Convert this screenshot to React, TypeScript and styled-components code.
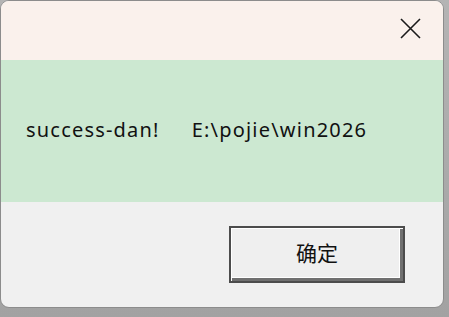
import React from "react";
import styled, { createGlobalStyle } from "styled-components";

const Global = createGlobalStyle`
  html, body { margin: 0; padding: 0; }
  body {
    width: 449px;
    height: 317px;
    overflow: hidden;
    background: linear-gradient(#b4b4b4, #a2a2a2);
    font-family: "Noto Sans", sans-serif;
  }
`;

const Window = styled.div`
  width: 444px;
  height: 308px;
  box-sizing: border-box;
  border: 1px solid #8c8c8c;
  border-radius: 9px;
  background: #f0f0f0;
  overflow: hidden;
  display: flex;
  flex-direction: column;
`;

const TitleBar = styled.div`
  height: 59px;
  flex: none;
  background: #faf1ec;
  display: flex;
  justify-content: flex-end;
  align-items: flex-start;
`;

const CloseButton = styled.button`
  border: none;
  background: transparent;
  margin: 16px 22px 0 0;
  padding: 0;
  width: 22px;
  height: 22px;
  display: flex;
  align-items: center;
  justify-content: center;
`;

const MessageArea = styled.div`
  height: 142px;
  flex: none;
  background: #cce8d1;
  display: flex;
  align-items: center;
  padding: 0 0 3px 25px;
  box-sizing: border-box;
  gap: 32px;
  color: #111;
  font-family: "Noto Sans", sans-serif;
  font-size: 20px;
  letter-spacing: 1.2px;
`;

const MessageText = styled.span`
  white-space: pre;
`;

const ButtonArea = styled.div`
  flex: 1;
  display: flex;
  justify-content: flex-end;
  align-items: flex-start;
  padding: 24px 38px 0 0;
`;

const OkButton = styled.button`
  width: 176px;
  height: 57px;
  box-sizing: border-box;
  border: 2px solid #4c4c4c;
  background: #efefef;
  box-shadow: inset 1px 1px 0 #ffffff, inset -3px -3px 0 #707070,
    inset -4px -4px 0 #ffffff;
  font-family: "Noto Sans CJK SC", "Noto Sans", sans-serif;
  font-size: 21px;
  color: #111;
  padding: 0 0 6px 0;
`;

export default function App() {
  return (
    <>
      <Global />
      <Window>
        <TitleBar>
          <CloseButton aria-label="close">
            <svg width="21" height="21" viewBox="0 0 21 21">
              <path d="M1 1 L20 20 M20 1 L1 20" stroke="#1a1a1a" strokeWidth="1.6" fill="none" />
            </svg>
          </CloseButton>
        </TitleBar>
        <MessageArea>
          <MessageText>success-dan!</MessageText>
          <MessageText>E:\pojie\win2026</MessageText>
        </MessageArea>
        <ButtonArea>
          <OkButton>确定</OkButton>
        </ButtonArea>
      </Window>
    </>
  );
}
